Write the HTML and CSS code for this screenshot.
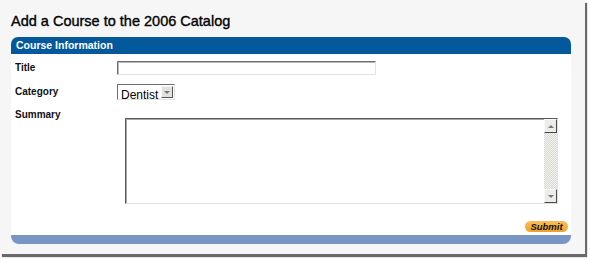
FILE: index.html
```html
<!DOCTYPE html>
<html lang="en">
<head>
    <meta charset="UTF-8">
    <title>Add a Course</title>
    <link rel="stylesheet" href="styles.css">
</head>
<body>
    <div class="frame">
        <h1>Add a Course to the 2006 Catalog</h1>

        <div class="panel">
            <div class="panel-head">Course Information</div>

            <form class="panel-body">
                <div class="field">
                    <label for="title">Title</label>
                    <input type="text" id="title" class="text-input">
                </div>

                <div class="field">
                    <label for="category">Category</label>
                    <div class="select-box">
                        <select id="category">
                            <option>Dentist</option>
                        </select>
                        <span class="select-btn"><span class="arrow-down"></span></span>
                    </div>
                </div>

                <div class="field field-summary">
                    <label for="summary">Summary</label>
                    <div class="textarea-box">
                        <textarea id="summary"></textarea>
                        <div class="scrollbar">
                            <span class="scroll-btn"><span class="arrow-up"></span></span>
                            <span class="scroll-track"></span>
                            <span class="scroll-btn"><span class="arrow-down"></span></span>
                        </div>
                    </div>
                </div>

                <div class="actions">
                    <button type="button" class="submit">Submit</button>
                </div>
            </form>

            <div class="panel-foot"></div>
        </div>
    </div>
</body>
</html>
```

FILE: styles.css
```css
body {
    margin: 0;
    min-height: 260px;
    background: #fff;
    font-family: "Liberation Sans", Arial, sans-serif;
}
.frame {
    width: 585px;
    height: 254px;
    box-sizing: border-box;
    padding: 13px 14px 0 11px;
    background: #f6f6f6;
    box-shadow: 2px 3px 1px #6a6a6a;
}
h1 {
    margin: 0;
    font-size: 14.5px;
    line-height: 17px;
    font-weight: normal;
    color: #000;
    -webkit-text-stroke: 0.35px #000;
}
.panel {
    margin-top: 7px;
    width: 560px;
}
.panel-head {
    height: 17px;
    padding-left: 5px;
    background: #03599c;
    border-radius: 7px 7px 0 0;
    color: #fff;
    font-size: 10.5px;
    font-weight: bold;
    line-height: 17px;
}
.panel-body {
    margin: 0;
    padding: 7px 3px 3px 4px;
    background: #fff;
}
.panel-foot {
    height: 9px;
    background: #7896c5;
    border-radius: 0 0 8px 8px;
}
.field {
    display: flex;
    align-items: center;
    margin-bottom: 9px;
}
.field label {
    width: 102px;
    flex: none;
    font-size: 10px;
    font-weight: bold;
    color: #111;
    line-height: 12px;
}
.text-input {
    width: 259px;
    height: 14px;
    box-sizing: border-box;
    margin: 0;
    padding: 0 2px;
    border: 1px solid;
    border-color: #6e6e6e #e2e2e2 #e2e2e2 #6e6e6e;
    box-shadow: inset 1px 1px 0 #b8b8b8;
    background: #fff;
}
.select-box {
    position: relative;
    width: 58px;
    height: 16px;
    box-sizing: border-box;
    border: 1px solid;
    border-color: #6e6e6e #e2e2e2 #e2e2e2 #6e6e6e;
    background: #fff;
}
.select-box select {
    appearance: none;
    -webkit-appearance: none;
    width: 100%;
    height: 14px;
    margin: 0;
    padding: 0 0 0 3px;
    border: none;
    background: transparent;
    font-family: "Liberation Sans", Arial, sans-serif;
    font-size: 12px;
    line-height: 14px;
    color: #000;
}
.select-btn {
    position: absolute;
    top: 1px;
    right: 1px;
    width: 12px;
    height: 12px;
    box-sizing: border-box;
    display: flex;
    align-items: center;
    justify-content: center;
    background: #e2e2de;
    border: 1px solid;
    border-color: #f6f6f6 #555 #555 #f6f6f6;
}
.arrow-down,
.arrow-up {
    width: 0;
    height: 0;
    border-left: 3px solid transparent;
    border-right: 3px solid transparent;
}
.arrow-down {
    border-top: 3px solid #777;
}
.arrow-up {
    border-bottom: 3px solid #777;
}
.field-summary {
    align-items: flex-start;
    margin: 8px 0 0;
}
.textarea-box {
    display: flex;
    width: 433px;
    height: 86px;
    box-sizing: border-box;
    margin: 9px 0 0 8px;
    border: 1px solid;
    border-color: #5a5a5a #e2e2e2 #e2e2e2 #5a5a5a;
    box-shadow: inset 1px 1px 0 #a8a8a8;
    background: #fff;
}
.textarea-box textarea {
    flex: 1;
    margin: 0;
    border: none;
    resize: none;
    background: transparent;
    outline: none;
}
.scrollbar {
    display: flex;
    flex-direction: column;
    width: 13px;
    flex: none;
}
.scroll-btn {
    height: 14px;
    box-sizing: border-box;
    display: flex;
    align-items: center;
    justify-content: center;
    background: #ecece8;
    border: 1px solid;
    border-color: #f8f8f8 #4a4a4a #4a4a4a #f8f8f8;
}
.scroll-track {
    flex: 1;
    background: repeating-conic-gradient(#f2f2ee 0 25%, #d9d9d3 0 50%) 0 0 / 2px 2px;
}
.actions {
    display: flex;
    justify-content: flex-end;
    margin-top: 17px;
}
.submit {
    width: 43px;
    height: 11px;
    padding: 0;
    border: none;
    border-radius: 6px;
    background: linear-gradient(#fbbe55, #f0a22a);
    color: #111;
    font-family: "Liberation Sans", Arial, sans-serif;
    font-size: 9.5px;
    font-weight: bold;
    font-style: italic;
    line-height: 11px;
    cursor: pointer;
}
```
